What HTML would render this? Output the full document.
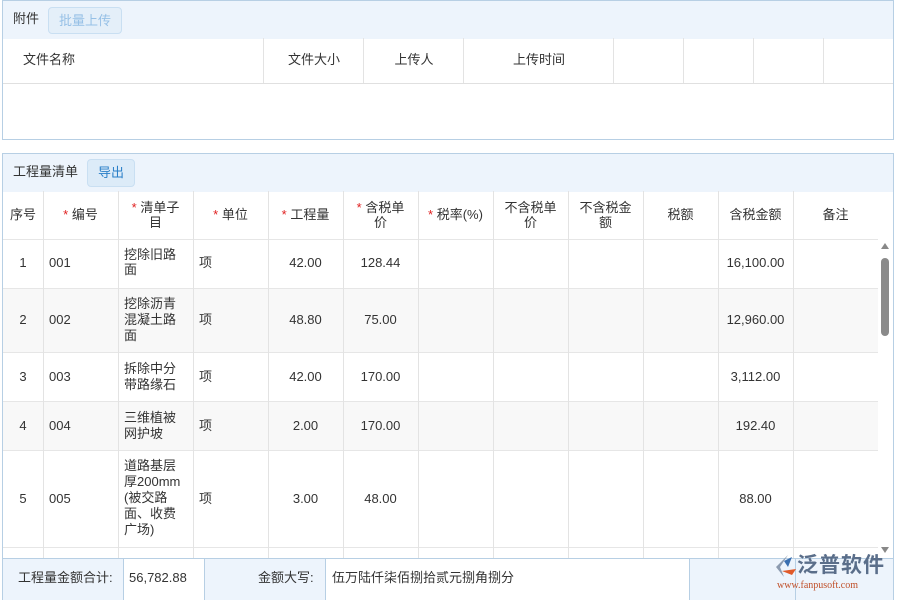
<!DOCTYPE html>
<html><head><meta charset="utf-8"><style>
*{margin:0;padding:0;box-sizing:border-box}
body{width:900px;height:600px;background:#fff;font-family:"Liberation Sans","Noto Sans CJK SC",sans-serif;font-size:13px;line-height:16px;color:#333;position:relative;overflow:hidden}
.abs{position:absolute}
.panel{position:absolute;border:1px solid #b7cfe4}
.bar{position:absolute;left:0;right:0;top:0;background:#edf4fc}
.btn{position:absolute;border:1px solid #c9dff2;border-radius:4px;background:#dcebf8;text-align:center}
.vl{position:absolute;width:1px;background:#e3e3e3}
.hl{position:absolute;height:1px;background:#e6e6e6}
.c{position:absolute;text-align:center;line-height:16px}
.m{line-height:15px}
.r{color:#e02020}
</style></head><body>
<!-- top panel -->
<div class="panel" style="left:2px;top:0;width:892px;height:140px">
 <div class="bar" style="height:38px"></div>
 <div class="abs" style="left:10px;top:10px">附件</div>
 <div class="btn" style="left:45px;top:6px;width:74px;height:27px;line-height:25px;color:#96c0e6;background:#e4eff9">批量上传</div>
 <div class="hl" style="left:0;right:0;top:82px;background:#e0e0e0"></div>
 <div class="abs" style="left:20px;top:51px">文件名称</div>
 <div class="c" style="left:261px;width:100px;top:51px">文件大小</div>
 <div class="c" style="left:361px;width:100px;top:51px">上传人</div>
 <div class="c" style="left:461px;width:150px;top:51px">上传时间</div>
</div>
<div class="vl" style="left:263px;top:38px;height:45px"></div>
<div class="vl" style="left:363px;top:38px;height:45px"></div>
<div class="vl" style="left:463px;top:38px;height:45px"></div>
<div class="vl" style="left:613px;top:38px;height:45px"></div>
<div class="vl" style="left:683px;top:38px;height:45px"></div>
<div class="vl" style="left:753px;top:38px;height:45px"></div>
<div class="vl" style="left:823px;top:38px;height:45px"></div>

<!-- second panel -->
<div class="panel" style="left:2px;top:153px;width:892px;height:447px;border-bottom:none">
 <div class="bar" style="height:38px"></div>
 <div class="abs" style="left:10px;top:10px">工程量清单</div>
 <div class="btn" style="left:84px;top:5px;width:48px;height:28px;line-height:26px;color:#2a7fc8">导出</div>
</div>
<!-- alt rows -->
<div class="abs" style="left:3px;top:289px;width:875px;height:64px;background:#f8f8f8"></div>
<div class="abs" style="left:3px;top:402px;width:875px;height:49px;background:#f8f8f8"></div>
<div class="hl" style="left:3px;width:875px;top:239px"></div>
<div class="hl" style="left:3px;width:875px;top:288px"></div>
<div class="hl" style="left:3px;width:875px;top:352px"></div>
<div class="hl" style="left:3px;width:875px;top:401px"></div>
<div class="hl" style="left:3px;width:875px;top:450px"></div>
<div class="hl" style="left:3px;width:875px;top:547px"></div>
<div class="vl" style="left:43px;top:191px;height:367px"></div>
<div class="vl" style="left:118px;top:191px;height:367px"></div>
<div class="vl" style="left:193px;top:191px;height:367px"></div>
<div class="vl" style="left:268px;top:191px;height:367px"></div>
<div class="vl" style="left:343px;top:191px;height:367px"></div>
<div class="vl" style="left:418px;top:191px;height:367px"></div>
<div class="vl" style="left:493px;top:191px;height:367px"></div>
<div class="vl" style="left:568px;top:191px;height:367px"></div>
<div class="vl" style="left:643px;top:191px;height:367px"></div>
<div class="vl" style="left:718px;top:191px;height:367px"></div>
<div class="vl" style="left:793px;top:191px;height:367px"></div>
<!-- header -->
<div class="c" style="left:3px;width:40px;top:207px">序号</div>
<div class="c" style="left:43px;width:75px;top:207px"><span class="r">* </span>编号</div>
<div class="c m" style="left:118px;width:75px;top:200px"><span class="r">* </span>清单子<br>目</div>
<div class="c" style="left:193px;width:75px;top:207px"><span class="r">* </span>单位</div>
<div class="c" style="left:268px;width:75px;top:207px"><span class="r">* </span>工程量</div>
<div class="c m" style="left:343px;width:75px;top:200px"><span class="r">* </span>含税单<br>价</div>
<div class="c" style="left:418px;width:75px;top:207px"><span class="r">* </span>税率(%)</div>
<div class="c m" style="left:493px;width:75px;top:200px">不含税单<br>价</div>
<div class="c m" style="left:568px;width:75px;top:200px">不含税金<br>额</div>
<div class="c" style="left:643px;width:75px;top:207px">税额</div>
<div class="c" style="left:718px;width:75px;top:207px">含税金额</div>
<div class="c" style="left:793px;width:85px;top:207px">备注</div>
<!-- rows -->
<div class="c" style="left:3px;width:40px;top:255px">1</div>
<div class="abs" style="left:49px;top:255px">001</div>
<div class="abs m" style="left:124px;top:247px">挖除旧路<br>面</div>
<div class="abs" style="left:199px;top:255px">项</div>
<div class="c" style="left:268px;width:75px;top:255px">42.00</div>
<div class="c" style="left:343px;width:75px;top:255px">128.44</div>
<div class="c" style="left:718px;width:75px;top:255px">16,100.00</div>

<div class="c" style="left:3px;width:40px;top:312px">2</div>
<div class="abs" style="left:49px;top:312px">002</div>
<div class="abs" style="left:124px;top:296px">挖除沥青<br>混凝土路<br>面</div>
<div class="abs" style="left:199px;top:312px">项</div>
<div class="c" style="left:268px;width:75px;top:312px">48.80</div>
<div class="c" style="left:343px;width:75px;top:312px">75.00</div>
<div class="c" style="left:718px;width:75px;top:312px">12,960.00</div>

<div class="c" style="left:3px;width:40px;top:369px">3</div>
<div class="abs" style="left:49px;top:369px">003</div>
<div class="abs" style="left:124px;top:361px">拆除中分<br>带路缘石</div>
<div class="abs" style="left:199px;top:369px">项</div>
<div class="c" style="left:268px;width:75px;top:369px">42.00</div>
<div class="c" style="left:343px;width:75px;top:369px">170.00</div>
<div class="c" style="left:718px;width:75px;top:369px">3,112.00</div>

<div class="c" style="left:3px;width:40px;top:418px">4</div>
<div class="abs" style="left:49px;top:418px">004</div>
<div class="abs" style="left:124px;top:410px">三维植被<br>网护坡</div>
<div class="abs" style="left:199px;top:418px">项</div>
<div class="c" style="left:268px;width:75px;top:418px">2.00</div>
<div class="c" style="left:343px;width:75px;top:418px">170.00</div>
<div class="c" style="left:718px;width:75px;top:418px">192.40</div>

<div class="c" style="left:3px;width:40px;top:491px">5</div>
<div class="abs" style="left:49px;top:491px">005</div>
<div class="abs" style="left:124px;top:458px">道路基层<br>厚200mm<br>(被交路<br>面、收费<br>广场)</div>
<div class="abs" style="left:199px;top:491px">项</div>
<div class="c" style="left:268px;width:75px;top:491px">3.00</div>
<div class="c" style="left:343px;width:75px;top:491px">48.00</div>
<div class="c" style="left:718px;width:75px;top:491px">88.00</div>
<!-- scrollbar -->
<div class="abs" style="left:881px;top:243px;width:0;height:0;border-left:4px solid transparent;border-right:4px solid transparent;border-bottom:6px solid #888"></div>
<div class="abs" style="left:881px;top:258px;width:8px;height:78px;background:#8a8a8a;border-radius:4px"></div>
<div class="abs" style="left:881px;top:547px;width:0;height:0;border-left:4px solid transparent;border-right:4px solid transparent;border-top:6px solid #888"></div>
<!-- footer -->
<div class="abs" style="left:2px;top:558px;width:892px;height:42px;background:#edf4fc;border-top:1px solid #b7cfe4;border-left:1px solid #b7cfe4;border-right:1px solid #b7cfe4"></div>
<div class="abs" style="left:123px;top:559px;width:82px;height:41px;background:#fff;border-left:1px solid #b7cfe4;border-right:1px solid #b7cfe4"></div>
<div class="abs" style="left:325px;top:559px;width:365px;height:41px;background:#fff;border-left:1px solid #b7cfe4;border-right:1px solid #b7cfe4"></div>
<div class="vl" style="left:795px;top:559px;height:41px;background:#b7cfe4"></div>
<div class="abs" style="left:18px;top:570px">工程量金额合计:</div>
<div class="abs" style="left:129px;top:570px">56,782.88</div>
<div class="abs" style="left:258px;top:570px">金额大写:</div>
<div class="abs" style="left:332px;top:570px">伍万陆仟柒佰捌拾贰元捌角捌分</div>
<!-- logo -->
<svg class="abs" style="left:770px;top:553px" width="30" height="28" viewBox="0 0 30 28"><path d="M18 2 L6 14 L14 24 L10 14 Z" fill="#8c9bb0"/><path d="M14 8 L22 4 L18 14 Z" fill="#3a6fb0"/><path d="M12 18 L22 22 L26 16 Z" fill="#e05a2a"/></svg>
<div class="abs" style="left:797px;top:554px;font-size:21px;line-height:24px;color:#5a6e8a;font-weight:bold;letter-spacing:1px">泛普软件</div>
<div class="abs" style="left:777px;top:580px;font-size:10px;line-height:12px;color:#c0502a;font-family:'Liberation Serif',serif">www.fanpusoft.com</div>
</body></html>
